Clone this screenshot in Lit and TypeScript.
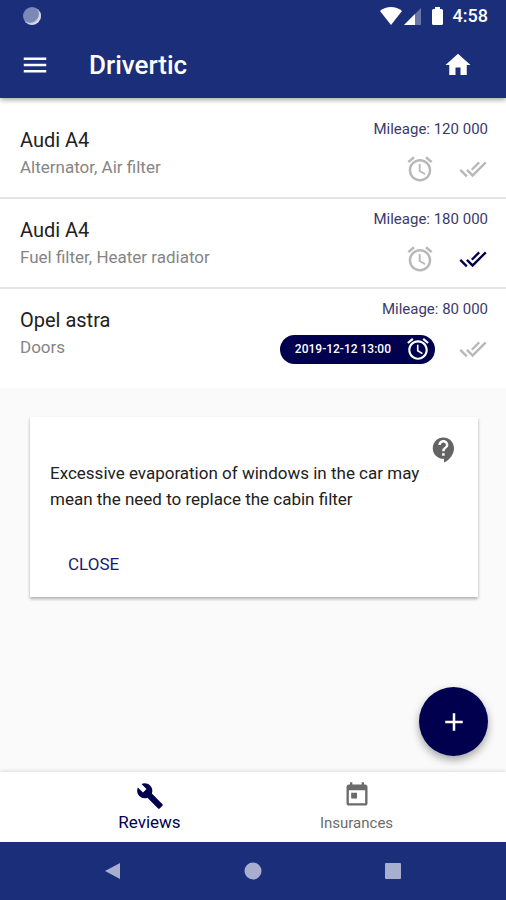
import { LitElement, html, css, svg, nothing } from "lit";
import { customElement, state } from "lit/decorators.js";
import { classMap } from "lit/directives/class-map.js";

interface Review {
  car: string;
  parts: string;
  mileage: string;
  reminder?: string;
  done: boolean;
}

const REVIEWS: Review[] = [
  { car: "Audi A4", parts: "Alternator, Air filter", mileage: "120 000", done: false },
  { car: "Audi A4", parts: "Fuel filter, Heater radiator", mileage: "180 000", done: true },
  { car: "Opel astra", parts: "Doors", mileage: "80 000", reminder: "2019-12-12 13:00", done: false },
];

const PATHS = {
  menu: "M3 18h18v-2H3v2zm0-5h18v-2H3v2zm0-7v2h18V6H3z",
  home: "M10 20v-6h4v6h5v-8h3L12 3 2 12h3v8z",
  alarm:
    "M22 5.72l-4.6-3.86-1.29 1.53 4.6 3.86L22 5.72zM7.88 3.39L6.6 1.86 2 5.71l1.29 1.53 4.59-3.85zM12.5 8H11v6l4.75 2.85.75-1.23-4-2.37V8zM12 4c-4.97 0-9 4.03-9 9s4.02 9 9 9c4.97 0 9-4.03 9-9s-4.03-9-9-9zm0 16c-3.87 0-7-3.13-7-7s3.13-7 7-7 7 3.13 7 7-3.13 7-7 7z",
  doneAll:
    "M18 7l-1.41-1.41-6.34 6.34 1.41 1.41L18 7zm4.24-1.41L11.66 16.17 7.48 12l-1.41 1.41L11.66 19l12-12-1.42-1.41zM.41 13.41L6 19l1.41-1.41L1.83 12 .41 13.41z",
  help: "M11.5 2C6.81 2 3 5.81 3 10.5S6.81 19 11.5 19h.5v3c4.86-2.34 8-7 8-11.5C20 5.81 16.19 2 11.5 2zm1 14.5h-2v-2h2v2zm0-3.5h-2c0-3.25 3-3 3-5 0-1.1-.9-2-2-2s-2 .9-2 2h-2c0-2.21 1.79-4 4-4s4 1.79 4 4c0 2.5-3 2.75-3 5z",
  add: "M19 13h-6v6h-2v-6H5v-2h6V5h2v6h6v2z",
  build:
    "M22.7 19l-9.1-9.1c.9-2.3.4-5-1.5-6.9-2-2-5-2.4-7.4-1.3L9 6 6 9 1.6 4.7C.4 7.1.9 10.1 2.9 12.1c1.9 1.9 4.6 2.4 6.9 1.5l9.1 9.1c.4.4 1 .4 1.4 0l2.3-2.3c.5-.4.5-1.1.1-1.4z",
  calendar:
    "M19 3h-1V1h-2v2H8V1H6v2H5c-1.11 0-1.99.9-1.99 2L3 19c0 1.1.89 2 2 2h14c1.1 0 2-.9 2-2V5c0-1.1-.9-2-2-2zm0 16H5V8h14v11zM7 10h5v5H7z",
};

const icon = (name: keyof typeof PATHS, size = "") => html`
  <svg class="icon ${size}" viewBox="0 0 24 24" aria-hidden="true">${svg`<path d=${PATHS[name]}></path>`}</svg>
`;

@customElement("app-root")
export class AppRoot extends LitElement {
  @state() private tab = "Reviews";
  @state() private tipOpen = true;

  static styles = css`
    :host {
      --bar: #1a2e7a;
      --ink: #00004f;
      display: flex;
      flex-direction: column;
      min-height: 100vh;
      background: #fafafa;
      color: #212121;
      font-family: Roboto, "Liberation Sans", sans-serif;
    }
    * {
      box-sizing: border-box;
    }
    button {
      display: flex;
      align-items: center;
      justify-content: center;
      margin: 0;
      padding: 0;
      border: 0;
      background: none;
      color: inherit;
      font: inherit;
      cursor: pointer;
    }
    .icon {
      display: block;
      flex: none;
      width: 30px;
      height: 30px;
      fill: currentColor;
    }
    .icon.medium {
      width: 28px;
      height: 28px;
    }
    .icon.small {
      width: 26px;
      height: 26px;
    }
    .top {
      position: relative;
      z-index: 1;
      background: var(--bar);
      color: #fff;
      box-shadow: 0 2px 5px rgba(0, 0, 0, 0.35);
    }
    .status {
      display: flex;
      align-items: center;
      justify-content: space-between;
      height: 32px;
      padding: 0 18px 0 23px;
    }
    .orb {
      width: 18px;
      height: 18px;
      border-radius: 50%;
      background: #7c88b6;
      box-shadow: inset -2px -2px 1px #d3d8e8;
    }
    .signals {
      display: flex;
      align-items: center;
    }
    .signals svg {
      display: block;
      height: 18px;
    }
    .clock {
      margin-left: 10px;
      font-size: 18px;
      font-weight: 500;
      line-height: 20px;
    }
    .appbar {
      display: flex;
      align-items: center;
      height: 66px;
      padding: 0 33px 0 20px;
    }
    h1 {
      flex: 1;
      margin: 0 0 0 39px;
      font-size: 26px;
      font-weight: 500;
      line-height: 30px;
    }
    main {
      position: relative;
      flex: 1;
    }
    .list {
      margin: 0;
      padding: 11px 0 9px;
      list-style: none;
      background: #fff;
    }
    .row {
      display: flex;
      justify-content: space-between;
      height: 90px;
      padding: 10px 18px 0 20px;
      border-bottom: 2px solid #e4e4e4;
    }
    .row:last-child {
      border-bottom-color: transparent;
    }
    .car {
      margin: 7px 0 0;
      font-size: 20px;
      font-weight: 400;
      line-height: 28px;
    }
    .parts {
      margin: 0;
      color: #858585;
      font-size: 17px;
      line-height: 26px;
    }
    .side {
      display: flex;
      flex-direction: column;
      align-items: flex-end;
      gap: 15px;
    }
    .mileage {
      color: #3a3a6c;
      font-size: 15px;
      line-height: 20px;
    }
    .actions {
      display: flex;
      align-items: center;
      gap: 24px;
      height: 30px;
      padding-right: 1px;
      color: #b8b8b8;
    }
    .done {
      color: var(--ink);
    }
    .pill {
      gap: 14px;
      height: 29px;
      padding: 0 4px 0 15px;
      border-radius: 15px;
      background: var(--ink);
      color: #fff;
      font-size: 12px;
      font-weight: 500;
    }
    .tip {
      display: flex;
      flex-direction: column;
      align-items: flex-start;
      margin: 29px 28px 0 30px;
      padding: 18px 19px 13px 20px;
      background: #fff;
      box-shadow: 0 2px 3px rgba(0, 0, 0, 0.3);
    }
    .tip .icon {
      align-self: flex-end;
      color: #646464;
    }
    .tip p {
      margin: -5px 0 0;
      font-size: 17px;
      line-height: 26px;
    }
    .close {
      height: 40px;
      margin-top: 32px;
      padding: 0 18px;
      color: #1a1a72;
      font-size: 17px;
    }
    .fab {
      position: absolute;
      right: 18px;
      bottom: 16px;
      width: 69px;
      height: 69px;
      border-radius: 50%;
      background: var(--ink);
      color: #fff;
      box-shadow: 0 4px 8px rgba(0, 0, 0, 0.35);
    }
    .tabs {
      display: flex;
      justify-content: center;
      height: 70px;
      background: #fff;
      box-shadow: 0 -1px 4px rgba(0, 0, 0, 0.12);
    }
    .tab {
      flex: 0 1 207px;
      flex-direction: column;
      gap: 4px;
      color: #6b6b6b;
      font-size: 15px;
      line-height: 20px;
    }
    .tab .icon {
      width: 28px;
      height: 28px;
    }
    .tab.active {
      gap: 2px;
      color: var(--ink);
      font-size: 17px;
    }
    .system {
      display: grid;
      grid-template-columns: repeat(3, 1fr);
      height: 58px;
      padding: 0 43px;
      background: var(--bar);
      color: #a7aed0;
    }
    .system svg {
      width: 18px;
      height: 18px;
      fill: currentColor;
    }
  `;

  private renderReview(r: Review) {
    return html`
      <li class="row">
        <div>
          <h2 class="car">${r.car}</h2>
          <p class="parts">${r.parts}</p>
        </div>
        <div class="side">
          <span class="mileage">Mileage: ${r.mileage}</span>
          <div class="actions">
            ${r.reminder
              ? html`<button class="pill"><span>${r.reminder}</span>${icon("alarm", "small")}</button>`
              : html`<button aria-label="Set reminder">${icon("alarm")}</button>`}
            <button class=${classMap({ done: r.done })} aria-label="Mark as done">${icon("doneAll", "medium")}</button>
          </div>
        </div>
      </li>
    `;
  }

  private renderTab(label: string, name: keyof typeof PATHS) {
    const active = this.tab === label;
    return html`
      <button
        class=${classMap({ tab: true, active })}
        aria-current=${active ? "page" : nothing}
        @click=${() => (this.tab = label)}
      >
        ${icon(name)}<span>${label}</span>
      </button>
    `;
  }

  render() {
    return html`
      <header class="top">
        <div class="status">
          <span class="orb"></span>
          <div class="signals">
            <svg width="22" viewBox="0 0 22 18" fill="#fff">
              <path d="M0 4C6-1.300 16-1.300 22 4L11 18z"></path>
            </svg>
            <svg width="30" viewBox="0 0 30 18" fill="#fff">
              <path d="M19 1v17H2z" opacity=".35"></path>
              <path d="M13 7v11H2z"></path>
            </svg>
            <svg width="11" viewBox="0 0 11 18" fill="#fff">
              <path d="M3 0h5v2h1.500q1.500 0 1.500 1.500v13q0 1.500-1.500 1.500h-8Q0 18 0 16.500v-13Q0 2 1.500 2H3z"></path>
            </svg>
            <span class="clock">4:58</span>
          </div>
        </div>
        <div class="appbar">
          <button aria-label="Menu">${icon("menu")}</button>
          <h1>Drivertic</h1>
          <button aria-label="Home">${icon("home")}</button>
        </div>
      </header>

      <main>
        <ul class="list">
          ${REVIEWS.map((r) => this.renderReview(r))}
        </ul>
        ${this.tipOpen
          ? html`<section class="tip">
              ${icon("help")}
              <p>Excessive evaporation of windows in the car may mean the need to replace the cabin filter</p>
              <button class="close" @click=${() => (this.tipOpen = false)}>CLOSE</button>
            </section>`
          : nothing}
        <button class="fab" aria-label="Add review">${icon("add")}</button>
      </main>

      <nav class="tabs">${this.renderTab("Reviews", "build")}${this.renderTab("Insurances", "calendar")}</nav>

      <footer class="system">
        <button aria-label="Back">
          <svg viewBox="0 0 18 18"><path d="M16 1v16L1 9z"></path></svg>
        </button>
        <button aria-label="Home screen">
          <svg viewBox="0 0 18 18"><circle cx="9" cy="9" r="8.500"></circle></svg>
        </button>
        <button aria-label="Recent apps">
          <svg viewBox="0 0 18 18"><rect x="1" y="1" width="16" height="16" rx="1"></rect></svg>
        </button>
      </footer>
    `;
  }
}
